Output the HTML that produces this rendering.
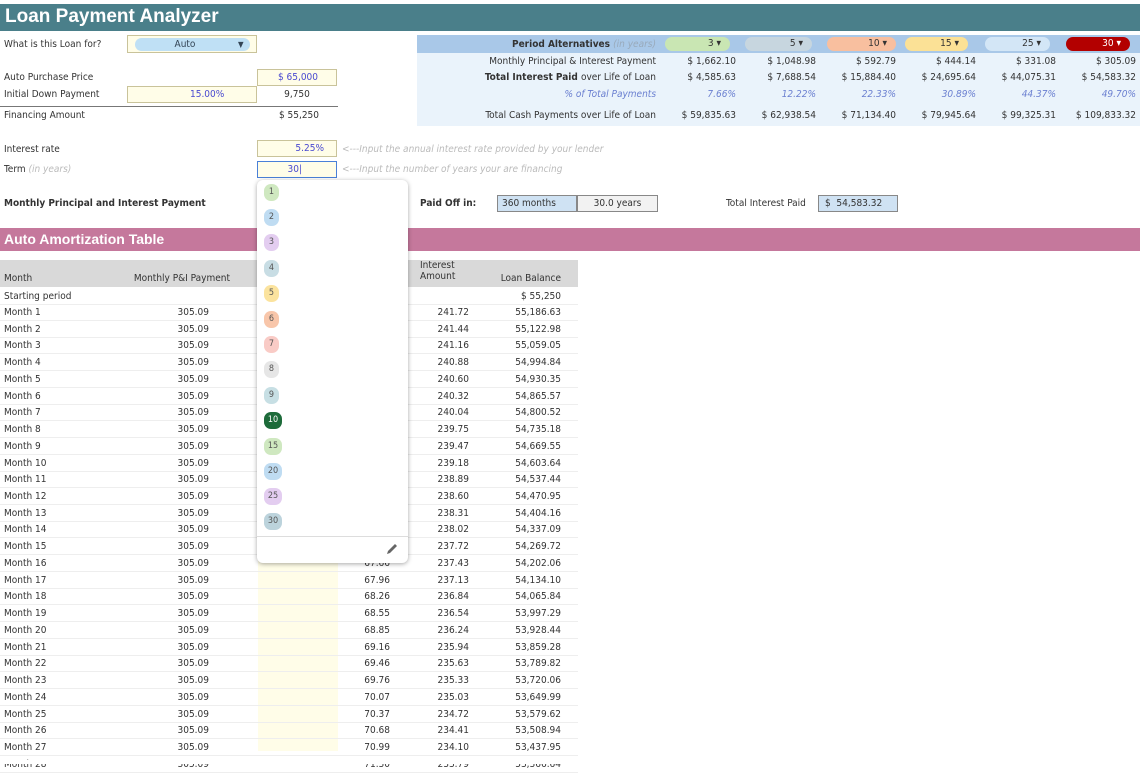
<!DOCTYPE html>
<html><head><style>
*{margin:0;padding:0;box-sizing:border-box}
body{width:1140px;height:764px;overflow:hidden;background:#fff;font-family:"DejaVu Sans Condensed","Liberation Sans",sans-serif;font-size:10px;color:#333;position:relative}
.a{position:absolute;white-space:nowrap}
.r{text-align:right}
.c{text-align:center}
.b{font-weight:bold}
.yl{background:#fffde8;border:1px solid #c9c39a}
.it{font-style:italic;color:#bbb}
.bl{color:#4a4ad0}
.row{position:absolute;left:0;width:578px;height:17px;line-height:17px;border-bottom:1px solid #eee}
.row span{position:absolute}
.chip{position:absolute;left:264px;width:15px;height:17px;border-radius:7px;font-size:9px;line-height:17px;text-align:center;color:#555}
.pc{position:absolute;top:37px;height:14px;border-radius:7px;padding-right:9px;line-height:14px;text-align:right}
.v{position:absolute;width:100px;text-align:right}
</style></head><body>
<div class="a" style="left:0;top:4px;width:1140px;height:27px;background:#4a7f8a"></div>
<div class="a b" style="left:5px;top:6px;font-size:19px;color:#fff;font-family:'Liberation Sans',sans-serif">Loan Payment Analyzer</div>

<div class="a" style="left:4px;top:39px">What is this Loan for?</div>
<div class="a yl" style="left:127px;top:35px;width:130px;height:18px"></div>
<div class="a" style="left:135px;top:38px;width:115px;height:13px;border-radius:7px;background:#bfe0f5"></div>
<div class="a c" style="left:135px;top:38px;width:100px;line-height:13px;color:#345">Auto</div>
<div class="a" style="left:238px;top:38px;line-height:13px;font-size:8px;color:#345">▼</div>

<div class="a" style="left:4px;top:72px">Auto Purchase Price</div>
<div class="a yl r bl" style="left:257px;top:69px;width:80px;height:17px;line-height:15px;padding-right:18px">$ 65,000</div>
<div class="a" style="left:4px;top:89px">Initial Down Payment</div>
<div class="a yl bl" style="left:127px;top:86px;width:130px;height:17px;line-height:15px;padding-left:62px">15.00%</div>
<div class="a c" style="left:257px;top:89px;width:80px">9,750</div>
<div class="a" style="left:0;top:106px;width:338px;border-top:1px solid #777"></div>
<div class="a" style="left:4px;top:110px">Financing Amount</div>
<div class="a r" style="left:257px;top:110px;width:80px;padding-right:18px">$ 55,250</div>

<div class="a" style="left:4px;top:144px">Interest rate</div>
<div class="a yl r bl" style="left:257px;top:140px;width:80px;height:17px;line-height:15px;padding-right:12px">5.25%</div>
<div class="a it" style="left:342px;top:144px">&lt;---Input the annual interest rate provided by your lender</div>
<div class="a" style="left:4px;top:164px">Term <span class="it">(in years)</span></div>
<div class="a r bl" style="left:257px;top:161px;width:80px;height:17px;line-height:15px;padding-right:34px;background:#fffde8;border:1.5px solid #4a80d8">30|</div>
<div class="a it" style="left:342px;top:164px">&lt;---Input the number of years your are financing</div>

<div class="a b" style="left:4px;top:198px">Monthly Principal and Interest Payment</div>
<div class="a b" style="left:420px;top:198px">Paid Off in:</div>
<div class="a" style="left:497px;top:195px;width:80px;height:17px;background:#cfe2f3;border:1px solid #888;line-height:15px;padding-left:4px">360 months</div>
<div class="a c" style="left:577px;top:195px;width:81px;height:17px;background:#f2f2f2;border:1px solid #888;line-height:15px">30.0 years</div>
<div class="a" style="left:726px;top:198px">Total Interest Paid</div>
<div class="a" style="left:818px;top:195px;width:80px;height:17px;background:#cfe2f3;border:1px solid #888;line-height:15px;padding-left:6px">$&nbsp;&nbsp;54,583.32</div>

<!-- right panel -->
<div class="a" style="left:417px;top:35px;width:723px;height:91px;background:#eaf3fb"></div>
<div class="a" style="left:417px;top:35px;width:723px;height:18px;background:#a9c8e8"></div>
<div class="a b r" style="left:420px;top:39px;width:236px">Period Alternatives <span class="it" style="font-weight:normal;color:#9ab">(in years)</span></div>
<div class="pc" style="left:665px;width:65px;background:#c9e6b3">3 ▾</div>
<div class="pc" style="left:745px;width:67px;background:#c7d6df">5 ▾</div>
<div class="pc" style="left:827px;width:69px;background:#f8bf9f">10 ▾</div>
<div class="pc" style="left:905px;width:63px;background:#fbe196">15 ▾</div>
<div class="pc" style="left:985px;width:65px;background:#d3e6f6">25 ▾</div>
<div class="pc" style="left:1066px;width:64px;background:#b30000;color:#fff">30 ▾</div>

<div class="a r" style="left:420px;top:56px;width:236px">Monthly Principal &amp; Interest Payment</div>
<div class="a r b" style="left:420px;top:72px;width:236px">Total Interest Paid <span style="font-weight:normal">over Life of Loan</span></div>
<div class="a r" style="left:420px;top:89px;width:236px;font-style:italic;color:#6a7fd0">% of Total Payments</div>
<div class="a r" style="left:420px;top:110px;width:236px">Total Cash Payments over Life of Loan</div>

<div class="v" style="left:636px;top:56px">$ 1,662.10</div><div class="v" style="left:716px;top:56px">$ 1,048.98</div><div class="v" style="left:796px;top:56px">$ 592.79</div><div class="v" style="left:876px;top:56px">$ 444.14</div><div class="v" style="left:956px;top:56px">$ 331.08</div><div class="v" style="left:1036px;top:56px">$ 305.09</div>
<div class="v" style="left:636px;top:72px">$ 4,585.63</div><div class="v" style="left:716px;top:72px">$ 7,688.54</div><div class="v" style="left:796px;top:72px">$ 15,884.40</div><div class="v" style="left:876px;top:72px">$ 24,695.64</div><div class="v" style="left:956px;top:72px">$ 44,075.31</div><div class="v" style="left:1036px;top:72px">$ 54,583.32</div>
<div class="v" style="left:636px;top:89px;font-style:italic;color:#6a7fd0">7.66%</div><div class="v" style="left:716px;top:89px;font-style:italic;color:#6a7fd0">12.22%</div><div class="v" style="left:796px;top:89px;font-style:italic;color:#6a7fd0">22.33%</div><div class="v" style="left:876px;top:89px;font-style:italic;color:#6a7fd0">30.89%</div><div class="v" style="left:956px;top:89px;font-style:italic;color:#6a7fd0">44.37%</div><div class="v" style="left:1036px;top:89px;font-style:italic;color:#6a7fd0">49.70%</div>
<div class="v" style="left:636px;top:110px">$ 59,835.63</div><div class="v" style="left:716px;top:110px">$ 62,938.54</div><div class="v" style="left:796px;top:110px">$ 71,134.40</div><div class="v" style="left:876px;top:110px">$ 79,945.64</div><div class="v" style="left:956px;top:110px">$ 99,325.31</div><div class="v" style="left:1036px;top:110px">$ 109,833.32</div>

<!-- amort -->
<div class="a" style="left:0;top:228px;width:1140px;height:23px;background:#c5789c"></div>
<div class="a b" style="left:4px;top:231px;font-size:14px;color:#fff;font-family:'Liberation Sans',sans-serif">Auto Amortization Table</div>
<div class="a" style="left:0;top:260px;width:578px;height:27px;background:#d9d9d9"></div>
<div class="a" style="left:4px;top:273px">Month</div>
<div class="a r" style="left:100px;top:273px;width:130px">Monthly P&amp;I Payment</div>
<div class="a" style="left:420px;top:260px">Interest<br>Amount</div>
<div class="a r" style="left:480px;top:273px;width:81px">Loan Balance</div>
<div class="a" style="left:258px;top:287px;width:80px;height:464px;background:#fffde8"></div>

<div id="t"></div>
<script>
var I=[241.72,241.44,241.16,240.88,240.60,240.32,240.04,239.75,239.47,239.18,238.89,238.60,238.31,238.02,237.72,237.43,237.13,236.84,236.54,236.24,235.94,235.63,235.33,235.03,234.72,234.41,234.10,233.79];
var P=["63.37","63.65","63.93","64.21","64.49","64.77","65.05","65.34","65.62","65.91","66.20","66.49","66.78","67.07","67.37","67.66","67.96","68.26","68.55","68.85","69.16","69.46","69.76","70.07","70.37","70.68","70.99","71.30"];
var B=["55,186.63","55,122.98","55,059.05","54,994.84","54,930.35","54,865.57","54,800.52","54,735.18","54,669.55","54,603.64","54,537.44","54,470.95","54,404.16","54,337.09","54,269.72","54,202.06","54,134.10","54,065.84","53,997.29","53,928.44","53,859.28","53,789.82","53,720.06","53,649.99","53,579.62","53,508.94","53,437.95","53,366.64"];
var h='<div class="row" style="top:288px"><span style="left:4px">Starting period</span><span style="right:17px">$ 55,250</span></div>';
for(var i=0;i<28;i++){var t=304+i*16.73;
h+='<div class="row" style="top:'+t+'px"><span style="left:4px">Month '+(i+1)+'</span><span style="right:369px">305.09</span><span style="right:188px">'+P[i]+'</span><span style="right:109px">'+I[i].toFixed(2)+'</span><span style="right:17px">'+B[i]+'</span></div>';}
document.getElementById('t').innerHTML=h;
</script>
<div class="a" style="left:0;top:760px;width:1140px;height:4px;background:#fff"></div>

<!-- dropdown -->
<div class="a" style="left:257px;top:180px;width:151px;height:383px;background:#fff;border-radius:6px;box-shadow:0 1px 5px rgba(0,0,0,.35)"></div>
<div class="chip" style="top:184px;background:#cfe8c0">1</div>
<div class="chip" style="top:209px;background:#bfdcf2">2</div>
<div class="chip" style="top:234px;background:#e3cdf0">3</div>
<div class="chip" style="top:260px;background:#c8dde4">4</div>
<div class="chip" style="top:285px;background:#fbe39e">5</div>
<div class="chip" style="top:311px;background:#f8c6aa">6</div>
<div class="chip" style="top:336px;background:#f9cbc6">7</div>
<div class="chip" style="top:361px;background:#e6e6e6">8</div>
<div class="chip" style="top:387px;background:#c7dfe4">9</div>
<div class="chip" style="top:412px;background:#1d6b3a;color:#fff;width:18px">10</div>
<div class="chip" style="top:438px;background:#cfe8c0;width:18px">15</div>
<div class="chip" style="top:463px;background:#bfdcf2;width:18px">20</div>
<div class="chip" style="top:488px;background:#e3cdf0;width:18px">25</div>
<div class="chip" style="top:513px;background:#bcd3dc;width:18px">30</div>
<div class="a" style="left:257px;top:536px;width:151px;border-top:1px solid #ddd"></div>
<svg class="a" style="left:385px;top:542px" width="14" height="14" viewBox="0 0 14 14"><path d="M2 12 L3 9 L10 2 L12 4 L5 11 Z" fill="#666"/></svg>
</body></html>
